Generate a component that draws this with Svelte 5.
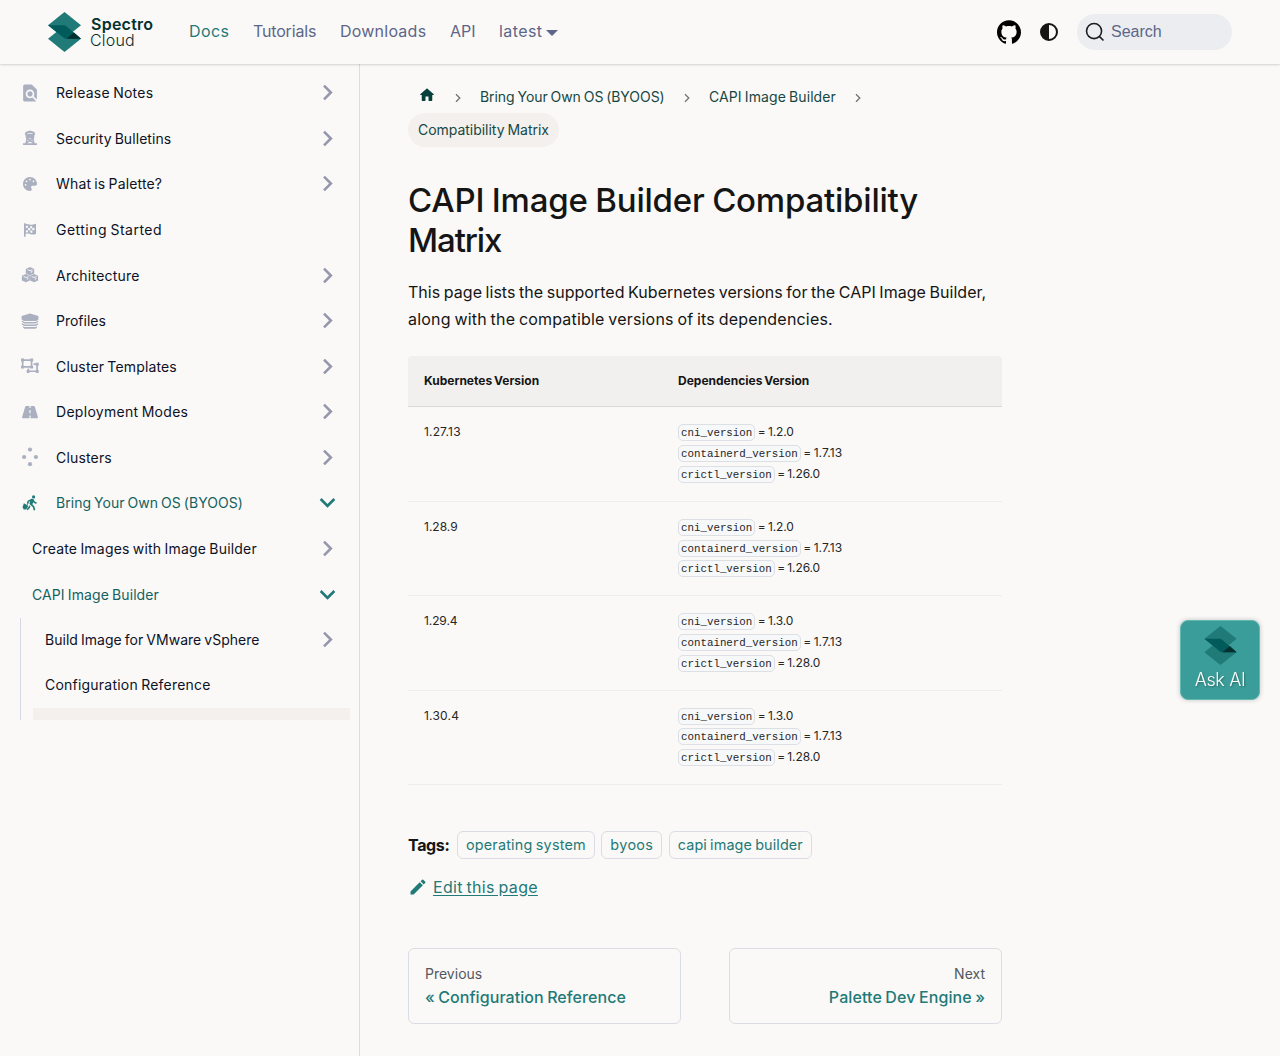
<script>
  const nav = [
    { label: 'Docs', ls: 0.4, active: true },
    { label: 'Tutorials', ls: -0.15 },
    { label: 'Downloads', ls: 0.24 },
    { label: 'API', ls: 0 },
    { label: 'latest', ls: 0.4, menu: true }
  ];

  const sidebar = [
    { label: 'Release Notes', icon: 'search', ls: 0.26, caret: 'right' },
    { label: 'Security Bulletins', icon: 'tower', ls: 0.07, caret: 'right' },
    { label: 'What is Palette?', icon: 'palette', ls: 0.16, caret: 'right' },
    { label: 'Getting Started', icon: 'flag', ls: 0.48 },
    { label: 'Architecture', icon: 'cubes', ls: 0.22, caret: 'right' },
    { label: 'Profiles', icon: 'layers', ls: 0, caret: 'right' },
    { label: 'Cluster Templates', icon: 'group', ls: 0.15, caret: 'right' },
    { label: 'Deployment Modes', icon: 'road', ls: 0.29, caret: 'right' },
    { label: 'Clusters', icon: 'dots', ls: 0.17, caret: 'right' },
    { label: 'Bring Your Own OS (BYOOS)', icon: 'walker', ls: 0.03, caret: 'down' },
    { label: 'Create Images with Image Builder', ls: 0.2, caret: 'right' },
    { label: 'CAPI Image Builder', ls: 0.1, caret: 'down' }
  ];

  const nested = [
    { label: 'Build Image for VMware vSphere', ls: 0.03, caret: 'right' },
    { label: 'Configuration Reference', ls: 0.22 }
  ];

  const rows = [
    { k8s: '1.27.13', ls: 0.15, cni: '1.2.0', containerd: '1.7.13', crictl: '1.26.0' },
    { k8s: '1.28.9', ls: 0, cni: '1.2.0', containerd: '1.7.13', crictl: '1.26.0' },
    { k8s: '1.29.4', ls: -0.1, cni: '1.3.0', containerd: '1.7.13', crictl: '1.28.0' },
    { k8s: '1.30.4', ls: 0.2, cni: '1.3.0', containerd: '1.7.13', crictl: '1.28.0' }
  ];

  const tags = [
    { label: 'operating system', ls: 0.2 },
    { label: 'byoos', ls: 0.36 },
    { label: 'capi image builder', ls: 0.1 }
  ];
</script>

{#snippet logo()}
  <svg class="mark" viewBox="0 0 33 40" aria-hidden="true">
    <path fill="#1f7a78" d="M16.5 0 33 13.2 16.5 26.6 0 13.2z" />
    <path fill="#1f7a78" d="M16.5 13.4 33 26.8 16.5 40 0 26.8z" />
    <path fill="#025b5b" d="M0 13.2h15.6q1.5 0 2.6 1L33 26.8H18.5q-1.6 0-2.8-1z" />
    <path fill="#04302f" d="M26 20.4 33 26.8H18.6z" />
  </svg>
{/snippet}

{#snippet caret(dir)}
  <svg class="caret {dir}" viewBox="0 0 24 24" aria-hidden="true">
    <path d="M7.41 15.41 12 10.83l4.59 4.58L18 14l-6-6-6 6z" />
  </svg>
{/snippet}

{#snippet chevron()}
  <svg class="crumb-sep" viewBox="0 0 8 10" aria-hidden="true">
    <path d="M2 1.2 5.8 5 2 8.8" />
  </svg>
{/snippet}

{#snippet icon(name)}
  <svg class="side-icon" viewBox="0 0 20 20" aria-hidden="true">
    {#if name === 'search'}
      <path transform="translate(-.3 -.3) scale(.86)" d="M20 19.59V8l-6-6H6c-1.1 0-1.99.9-1.99 2L4 20c0 1.1.89 2 1.99 2H18c.45 0 .85-.15 1.19-.4l-4.43-4.43c-.8.52-1.74.83-2.76.83-2.76 0-5-2.24-5-5s2.24-5 5-5 5 2.24 5 5c0 1.02-.31 1.96-.83 2.75L20 19.59zM9 13c0 1.66 1.34 3 3 3s3-1.34 3-3-1.34-3-3-3-3 1.34-3 3z" />
    {:else if name === 'tower'}
      <path fill-rule="evenodd" d="M10 2.4 14.6 4v1.2h.5v1.6h-.6l-.4 3.6h-.5l1.1 4.8H17v1.7H3v-1.7h2.3l1.1-4.8h-.5l-.4-3.6h-.6V5.2h.5V4zM7.4 5.2v.9h5.2v-.9zM8.4 10.4l1.6 1.1 1.6-1.1zM7.7 12l-.4 1.5 1.5-.9zM12.3 12l-1.1.6 1.5.9zM10 13.4l-2.8 1.8h5.6z" />
    {:else if name === 'palette'}
      <path transform="translate(3 3) scale(.0273)" d="M512 256c0 .9 0 1.8 0 2.7c-.4 36.5-33.6 61.3-70.1 61.3H344c-26.5 0-48 21.5-48 48c0 3.4 .4 6.7 1 9.9c2.1 10.2 6.5 20 10.8 29.9c6.1 13.8 12.1 27.5 12.1 42c0 31.8-21.6 60.7-53.4 62c-3.5 .1-7 .2-10.6 .2C114.6 512 0 397.4 0 256S114.6 0 256 0S512 114.6 512 256zM128 288a32 32 0 1 0 -64 0 32 32 0 1 0 64 0zm0-96a32 32 0 1 0 0-64 32 32 0 1 0 0 64zM288 96a32 32 0 1 0 -64 0 32 32 0 1 0 64 0zm96 96a32 32 0 1 0 0-64 32 32 0 1 0 0 64z" />
    {:else if name === 'flag'}
      <path fill-rule="evenodd" d="M4 3.3h1.6v.9c2.6-1 4.2.9 6.4.5 1.5-.2 2.5-.9 4-1V14c-3 .9-4.3.5-6-.1-1.7-.5-3-.3-4.4.1v2.8H4zM5.9 5.9v2.2l2.1-.4V5.5zm4.3.1v2.2l2.1.2V6.2zM8 7.9v2.3l2.2.2V8.2zm4.3.4v2.3l2.2-.6V7.7zM5.9 10.4v2.2l2.1-.3v-2.2zm4.3.1v2.1l2.1.4v-2.3z" />
    {:else if name === 'cubes'}
      <path d="M10 2l4.2 1.9v4.6L10 10.2 5.8 8.5V3.9zM5.9 9l4 1.7v4.8l-4 1.7-4-1.7v-4.8zM14.1 9l4 1.7v4.8l-4 1.7-4-1.7v-4.8z" />
      <path class="cut" d="M7.5 4.7 10 5.7l2.5-1M11.3 7.8V6.7l1.3-.5M3.5 11.5l2.5 1 2.3-1M7.2 14.7v-1.2l1.3-.5M11.7 11.5l2.3 1 2.5-1M15.3 14.7v-1.2l1.3-.5" />
    {:else if name === 'layers'}
      <path d="M10 2.6 18.4 5v3.6L16 9.9H4L1.6 8.6V5z" />
      <path d="M1.8 9.5 4.6 11h10.8l2.8-1.5v1.3l-2.6 1.7H4.4l-2.6-1.7zM1.8 12.1l2.8 1.5h10.8l2.8-1.5v1.3l-2.6 1.7H4.4l-2.6-1.7zM2.6 15.2l2.2.9h10.4l2.2-.9-.9 1.7-1 .8H4.5l-1-.8z" />
    {:else if name === 'group'}
      <path fill-rule="evenodd" d="M1 2.5h3v.8h6.2v-.8h3v3h-.8v4.2h.8v2.8h-3v-.8H4v.8H1V9.7h.8V5.5H1zM4 5.1v.4h-.5v4.2H4v.4h6.2v-.4h.5V5.5h-.5v-.4z" />
      <path d="M13.6 7.3h2.2v-.5h2.9v2.9h-.8v4.4h.8V17h-2.9v-.9H9.5v.9H6.7v-2.9h.8v-1.5h1.7v1.5h.3v.4h6.3v-.4h.4V9.7h-.4v-.6h-2.2z" />
    {:else if name === 'road'}
      <path d="M6.2 4h3.2v2h1.2V4h3.2c.5 0 .9.3 1 .8L17.9 15c.2.7-.3 1.3-1 1.3h-6.3v-2.9H9.4v2.9H3.1c-.7 0-1.2-.6-1-1.3L5.2 4.8c.1-.5.5-.8 1-.8zM9.4 8v3.3h1.2V8z" />
    {:else if name === 'dots'}
      <circle cx="10" cy="2.6" r="2.1" /><circle cx="4.1" cy="10" r="2.1" />
      <circle cx="15.9" cy="10" r="2.1" /><circle cx="10" cy="17.2" r="2.1" />
    {:else if name === 'walker'}
      <circle cx="13.6" cy="3.9" r="1.6" />
      <path d="M11.5 5.8c1.5-.3 2.3.5 2.7 1.6l.5 1.1 2.1 1.1-.6 1.3-2.5-1.1-.5-.9-.8 2.6 2 1.9.9 3.6-1.6.4-.8-3.2-2.9-2.6c-.5-.5-.6-1-.4-1.6l.6-2-1.2.7-.8 1.9-1.4-.5.9-2.4z" />
      <path d="M9.2 12.2l1.3 1.2-.7 1.6-2 2.2-1.2-1 1.9-2.2zM3.9 10.3l3.8 2.2c.4.2.5.6.3 1l-1.5 2.6c-.2.4-.6.5-1 .3l-.4-.2a1 1 0 0 1-1.7-1l-.5-.3c-.4-.2-.5-.6-.3-1zM7.7 9.7l.9.5-1 1.8-.9-.5z" />
    {/if}
  </svg>
{/snippet}

{#snippet row(item)}
  <li class="item" class:active={item.caret === 'down'}>
    {#if item.icon}{@render icon(item.icon)}{/if}
    <a href="#top" style:letter-spacing="{item.ls}px">{item.label}</a>
    {#if item.caret}{@render caret(item.caret)}{/if}
  </li>
{/snippet}

<header class="navbar">
  <a class="brand" href="#top">
    {@render logo()}
    <span class="word"><b>Spectro</b><span>Cloud</span></span>
  </a>
  <nav class="links">
    {#each nav as link}
      <a href="#top" class:active={link.active} class:menu={link.menu} style:letter-spacing="{link.ls}px">{link.label}</a>
    {/each}
  </nav>
  <div class="tools">
    <svg class="github" viewBox="0 0 24 24" aria-hidden="true">
      <path d="M12 .297c-6.63 0-12 5.373-12 12 0 5.303 3.438 9.8 8.205 11.385.6.113.82-.258.82-.577 0-.285-.01-1.04-.015-2.04-3.338.724-4.042-1.61-4.042-1.61C4.422 18.07 3.633 17.7 3.633 17.7c-1.087-.744.084-.729.084-.729 1.205.084 1.838 1.236 1.838 1.236 1.07 1.835 2.809 1.305 3.495.998.108-.776.417-1.305.76-1.605-2.665-.3-5.466-1.332-5.466-5.93 0-1.31.465-2.38 1.235-3.22-.135-.303-.54-1.523.105-3.176 0 0 1.005-.322 3.3 1.23.96-.267 1.98-.399 3-.405 1.02.006 2.04.138 3 .405 2.28-1.552 3.285-1.23 3.285-1.23.645 1.653.24 2.873.12 3.176.765.84 1.23 1.91 1.23 3.22 0 4.61-2.805 5.625-5.475 5.92.42.36.81 1.096.81 2.22 0 1.606-.015 2.896-.015 3.286 0 .315.21.69.825.57C20.565 22.092 24 17.592 24 12.297c0-6.627-5.373-12-12-12" />
    </svg>
    <svg class="theme" viewBox="0 0 18 18" aria-hidden="true">
      <circle cx="9" cy="9" r="8" /><path d="M9 1a8 8 0 0 0 0 16z" />
    </svg>
    <button class="search">
      <svg viewBox="0 0 20 20" aria-hidden="true">
        <path d="M14.386 14.386l4.0877 4.0877-4.0877-4.0877c-2.9418 2.9419-7.7115 2.9419-10.6533 0-2.9419-2.9418-2.9419-7.7115 0-10.6533 2.9418-2.9419 7.7115-2.9419 10.6533 0 2.9419 2.9418 2.9419 7.7115 0 10.6533z" />
      </svg>
      <span>Search</span>
    </button>
  </div>
</header>

<div class="layout">
  <aside>
    <div class="scroll">
      <ul>
        {#each sidebar as item}{@render row(item)}{/each}
      </ul>
      <ul class="nested">
        {#each nested as item}{@render row(item)}{/each}
        <li class="current"></li>
      </ul>
    </div>
  </aside>

  <main>
    <nav class="crumbs">
      <div class="crumb-line">
        <svg class="home" viewBox="0 0 24 24" aria-hidden="true">
          <path d="M10 19v-5h4v5c0 .55.45 1 1 1h3c.55 0 1-.45 1-1v-7h1.7c.46 0 .68-.57.33-.87L12.67 3.6c-.38-.34-.96-.34-1.34 0l-8.36 7.53c-.34.3-.13.87.33.87H5v7c0 .55.45 1 1 1h3c.55 0 1-.45 1-1z" />
        </svg>
        {@render chevron()}
        <a class="c1" href="#top">Bring Your Own OS (BYOOS)</a>
        {@render chevron()}
        <a class="c2" href="#top">CAPI Image Builder</a>
        {@render chevron()}
      </div>
      <span class="here">Compatibility Matrix</span>
    </nav>

    <h1>CAPI Image Builder Compatibility<br /><span>Matrix</span></h1>
    <p class="intro">This page lists the supported Kubernetes versions for the CAPI Image Builder,<br /><span>along with the compatible versions of its dependencies.</span></p>

    <table>
      <thead>
        <tr><th>Kubernetes Version</th><th>Dependencies Version</th></tr>
      </thead>
      <tbody>
        {#each rows as r}
          <tr>
            <td><div style:letter-spacing="{r.ls}px">{r.k8s}</div></td>
            <td>
              <div><code>cni_version</code><span class="v1">= {r.cni}</span></div>
              <div><code>containerd_version</code><span class="v2">= {r.containerd}</span></div>
              <div><code>crictl_version</code><span class="v3">= {r.crictl}</span></div>
            </td>
          </tr>
        {/each}
      </tbody>
    </table>

    <div class="tags">
      <b>Tags:</b>
      {#each tags as tag}
        <a href="#top" style:letter-spacing="{tag.ls}px">{tag.label}</a>
      {/each}
    </div>

    <div class="edit">
      <svg viewBox="0 0 40 40" aria-hidden="true">
        <path d="m34.5 11.7l-3 3.1-6.3-6.3 3.1-3q0.5-0.5 1.2-0.5t1.1 0.5l3.9 3.9q0.5 0.4 0.5 1.1t-0.5 1.2z m-29.5 17.1l18.4-18.5 6.3 6.3-18.4 18.4h-6.3v-6.2z" />
      </svg>
      <a href="#top">Edit this page</a>
    </div>

    <nav class="pager">
      <a href="#top"><small>Previous</small><span class="prev">« Configuration Reference</span></a>
      <a class="right" href="#top"><small>Next</small><span class="next">Palette Dev Engine »</span></a>
    </nav>
  </main>
</div>

<button class="ask">{@render logo()}<span>Ask AI</span></button>

<style>
  :global(body) {
    background: #faf9f7;
    font-family: Inter, 'Liberation Sans', sans-serif;
    word-spacing: -0.06em;
    color: #151515;
    height: 1056px;
    overflow: hidden;
  }
  a { color: inherit; text-decoration: none; }
  ul { list-style: none; margin: 0; padding: 0; }
  button { border: 0; font: inherit; }
  svg { flex: none; display: block; }

  .navbar {
    position: relative;
    z-index: 2;
    height: 64px;
    box-sizing: border-box;
    padding: 0 48px;
    display: flex;
    align-items: center;
    background: #faf9f7;
    box-shadow: 0 1px 2px rgba(0, 0, 0, 0.16);
  }
  .brand { display: flex; align-items: center; width: 141px; }
  .brand .mark { width: 33px; height: 40px; }
  .word { display: flex; flex-direction: column; margin-left: 10px; color: #04302f; line-height: 16px; }
  .word b { font-size: 16px; font-weight: 600; letter-spacing: 0.25px; }
  .word span { font-size: 16px; font-weight: 300; letter-spacing: 0.2px; margin-left: -1px; }
  .links { display: flex; gap: 23.6px; color: #5d6689; font-size: 16px; line-height: 24px; margin-top: -2px; }
  .links .active { color: #1f7a78; }
  .links .menu::after {
    content: '';
    display: inline-block;
    margin-left: 4px;
    vertical-align: 1px;
    border: 6.4px solid transparent;
    border-top-color: currentColor;
    border-bottom: 0;
  }
  .tools { display: flex; align-items: center; margin-left: auto; }
  .github { width: 24px; height: 24px; }
  .theme { width: 18px; height: 18px; margin: 0 19px; fill: #151515; }
  .theme circle { fill: none; stroke: #151515; stroke-width: 2; }
  .search {
    width: 155px;
    height: 36px;
    padding: 0 8px;
    border-radius: 18px;
    background: #ebedf0;
    display: flex;
    align-items: center;
    gap: 6px;
    color: #5d6689;
    font: 16px 'Liberation Sans', sans-serif;
  }
  .search svg { width: 20px; height: 20px; overflow: visible; fill: none; stroke: #1c1e21; stroke-width: 1.6; stroke-linecap: round; }

  .layout { display: flex; }
  aside { width: 359px; height: 992px; border-right: 1px solid #dadde1; flex: none; }
  .scroll { height: 656px; overflow: hidden; padding-top: 6px; box-sizing: border-box; }
  .item {
    height: 45.58px;
    display: flex;
    align-items: center;
    padding: 0 16px 0 20px;
    font-size: 14px;
    font-weight: 425;
    color: #0d1226;
  }
  .item > a { margin-left: 12px; white-space: nowrap; }
  .side-icon { width: 20px; height: 20px; fill: #abb0c0; }
  .side-icon + a { margin-left: 16px; }
  .side-icon .cut { fill: none; stroke: #faf9f7; stroke-width: 0.9; }
  .caret { width: 31px; height: 31px; margin-left: auto; fill: #9597ac; }
  .caret.right { transform: rotate(90deg); }
  .caret.down { transform: rotate(180deg); }
  .active .caret, .active .side-icon { fill: #1f7a78; }
  .item.active { color: #14625f; }
  .nested { border-left: 1px solid #d5d9e4; margin-left: 20px; padding-left: 12px; margin-top: 1.5px; }
  .nested .item { padding-left: 0; height: 46.5px; }
  .nested .item:first-child { height: 43px; }
  .current { height: 46px; width: 317px; background: #f3f0ed; }

  main { width: 594px; margin: 16px 0 0 48px; }
  .crumbs { font-size: 14px; color: #154844; height: 67px; }
  .crumb-line { display: flex; align-items: center; height: 33px; }
  .home { width: 18px; height: 18px; fill: #06403d; margin: 0 17.5px 4px 10px; }
  .crumb-sep { width: 8px; height: 10px; fill: none; stroke: #737373; stroke-width: 1.3; margin-top: 2px; }
  .c1 { margin: 0 18px 0 18.5px; width: 185px; white-space: nowrap; letter-spacing: -0.06px; }
  .c2 { margin: 0 18px; width: 127px; white-space: nowrap; letter-spacing: 0.1px; }
  .here {
    display: inline-flex;
    align-items: center;
    height: 33px;
    padding: 0 10px 1px;
    border-radius: 17px;
    background: #f3f0ed;
    letter-spacing: -0.03px;
  }
  h1 { margin: 33px 0 0; font-size: 33px; line-height: 40px; font-weight: 450; letter-spacing: -0.21px; white-space: nowrap; }
  h1 span { letter-spacing: -1.1px; }
  .intro { margin: 18.5px 0 23px; font-size: 16px; line-height: 27px; letter-spacing: 0.03px; white-space: nowrap; }
  .intro span { letter-spacing: 0.19px; }

  table { width: 594px; border-collapse: separate; border-spacing: 0; font-size: 12px; table-layout: fixed; }
  th { height: 50px; padding: 0 16px; text-align: left; background: #f2f0ee; font-weight: 650; border-bottom: 1px solid #d9d9d9; }
  th:first-child { width: 222px; border-radius: 4px 0 0; }
  th:last-child { border-radius: 0 4px 0 0; }
  td { padding: 14px 16px 17px; vertical-align: top; border-bottom: 1px solid #f0eeec; }
  tbody tr:first-child td { padding-top: 15px; }
  td div { height: 20.8px; display: flex; align-items: center; color: #262626; }
  code {
    font: 10.8px/16px 'Liberation Mono', monospace;
    word-spacing: 0;
    padding: 0 2px;
    height: 15px;
    margin: 2px 2.5px 0 0;
    border: 1px solid #dcdfe3;
    border-radius: 5px;
    background: #f6f8fa;
  }
  .v1 { letter-spacing: -0.1px; }
  .v2 { letter-spacing: 0.08px; }
  .v3 { letter-spacing: -0.12px; }

  .tags { display: flex; align-items: center; margin-top: 45.5px; height: 28px; gap: 6.7px; }
  .tags b { font-size: 16px; letter-spacing: -0.35px; width: 42.3px; white-space: nowrap; }
  .tags a { font-size: 14.4px; line-height: 26px; padding: 0 7.9px; border: 1px solid #dadde5; border-radius: 6px; color: #1f7a78; }
  .edit { display: flex; align-items: center; height: 24px; margin-top: 16px; gap: 5px; color: #1f7a78; }
  .edit svg { width: 20px; height: 20px; fill: currentColor; }
  .edit a { text-decoration: underline; letter-spacing: 0.3px; text-underline-offset: 2px; }

  .pager { display: grid; grid-template-columns: 1fr 1fr; gap: 48px; margin-top: 49px; }
  .pager a {
    height: 76px;
    box-sizing: border-box;
    padding: 12px 16px 0;
    border: 1px solid #dadde5;
    border-radius: 6px;
    display: flex;
    flex-direction: column;
    color: #1f7a78;
    font-weight: 500;
  }
  .pager small { font-size: 14px; line-height: 25px; font-weight: 425; color: #525860; }
  .pager span { line-height: 22px; }
  .pager .prev { letter-spacing: 0.07px; }
  .pager .next { letter-spacing: 0.1px; }
  .right { text-align: right; }

  .ask {
    position: fixed;
    left: 1180px;
    top: 620px;
    width: 80px;
    height: 80px;
    padding: 6px 0 0;
    border: 1px solid #63b8b2;
    border-radius: 8px;
    background: #3b9d99;
    box-shadow: 0 0 5px rgba(0, 0, 0, 0.22);
    display: flex;
    flex-direction: column;
    align-items: center;
    color: #fff;
  }
  .ask .mark { width: 33px; height: 39px; margin-top: -1px; }
  .ask span { font-size: 18px; line-height: 26px; letter-spacing: -0.36px; font-weight: 350; text-shadow: 1px 1px 2px rgba(0, 0, 0, 0.3); margin-top: 2px; }
</style>
